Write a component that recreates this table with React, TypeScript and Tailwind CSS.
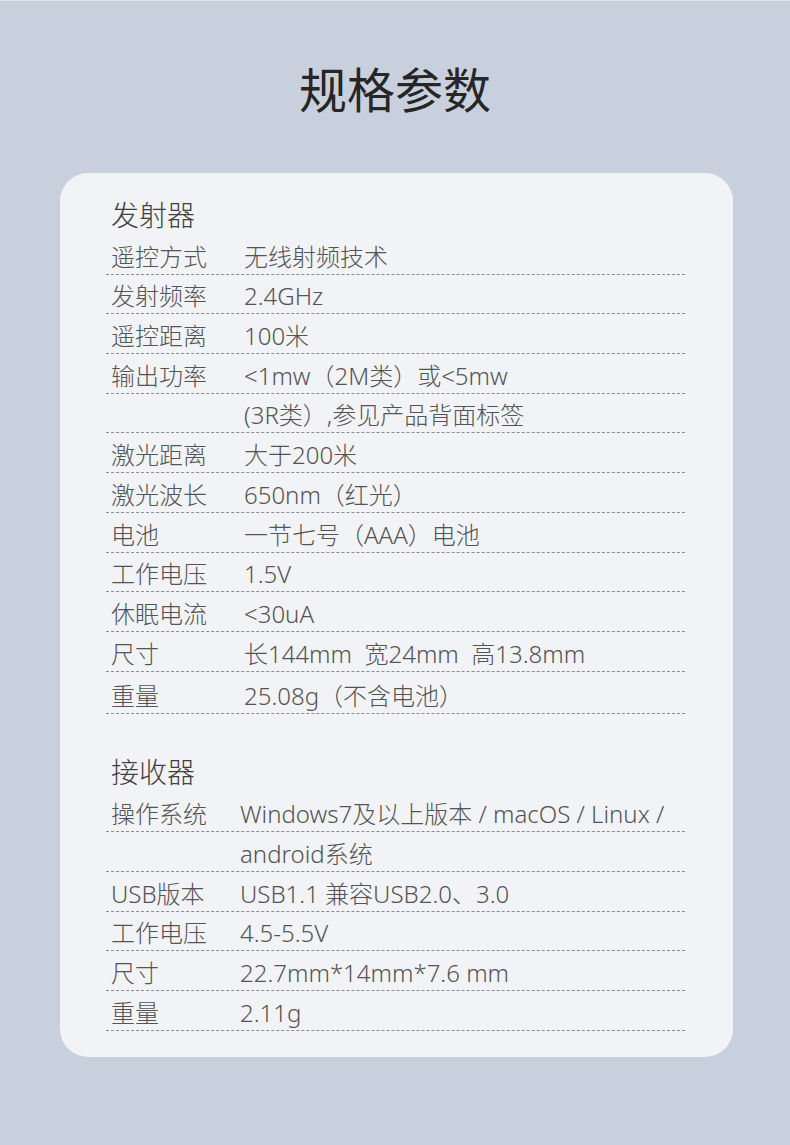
import React from 'react';

type Row = { label: string; value: string; last?: boolean };

const sender: Row[] = [
  { label: '遥控方式', value: '无线射频技术' },
  { label: '发射频率', value: '2.4GHz' },
  { label: '遥控距离', value: '100米' },
  { label: '输出功率', value: '<1mw（2M类）或<5mw' },
  { label: '', value: '(3R类）,参见产品背面标签' },
  { label: '激光距离', value: '大于200米' },
  { label: '激光波长', value: '650nm（红光）' },
  { label: '电池', value: '一节七号（AAA）电池' },
  { label: '工作电压', value: '1.5V' },
  { label: '休眠电流', value: '<30uA' },
  { label: '尺寸', value: '长144mm  宽24mm  高13.8mm' },
  { label: '重量', value: '25.08g（不含电池）', last: true },
];

const receiver: Row[] = [
  { label: '操作系统', value: 'Windows7及以上版本 / macOS / Linux /' },
  { label: '', value: 'android系统' },
  { label: 'USB版本', value: 'USB1.1 兼容USB2.0、3.0' },
  { label: '工作电压', value: '4.5-5.5V' },
  { label: '尺寸', value: '22.7mm*14mm*7.6 mm' },
  { label: '重量', value: '2.11g' },
];

const SpecRow: React.FC<{ row: Row; labelW: string }> = ({ row, labelW }) => (
  <div
    className={`flex items-end border-b border-dashed border-[#8c8c8c] pl-[5px] pb-[1px] ${
      row.last ? 'h-[42px]' : 'h-[39.7px]'
    }`}
  >
    <div className={`${labelW} shrink-0 text-[24px] font-light leading-[32px] text-[#545454]`}>{row.label}</div>
    <div className="whitespace-pre text-[24px] font-light leading-[32px] text-[#545454]">{row.value}</div>
  </div>
);

export default function App() {
  return (
    <div
      className="relative min-h-[1145px] w-[790px] bg-[#c9d0dd]"
      style={{ fontFamily: '"Noto Sans", "Noto Sans CJK SC", sans-serif' }}
    >
      <div className="h-[1px] w-full bg-[#dfe3ea]" />
      <h1 className="mt-[57px] text-center text-[48px] font-normal leading-[64px] text-[#262626]">
        规格参数
      </h1>
      <div className="ml-[60px] mr-[57px] mt-[51px] rounded-[28px] bg-[#f2f3f6] pb-[26px] pl-[46px] pr-[48px] pt-[24px]">
        <h2 className="pl-[5px] text-[28px] font-light leading-[36px] text-[#404040]">发射器</h2>
        <div className="mt-[2px]">
          {sender.map((r, i) => (
            <SpecRow key={i} row={r} labelW="w-[133px]" />
          ))}
        </div>
        <h2 className="mt-[40px] pl-[5px] text-[28px] font-light leading-[36px] text-[#404040]">接收器</h2>
        <div className="mt-[3px]">
          {receiver.map((r, i) => (
            <SpecRow key={i} row={r} labelW="w-[129px]" />
          ))}
        </div>
      </div>
    </div>
  );
}
